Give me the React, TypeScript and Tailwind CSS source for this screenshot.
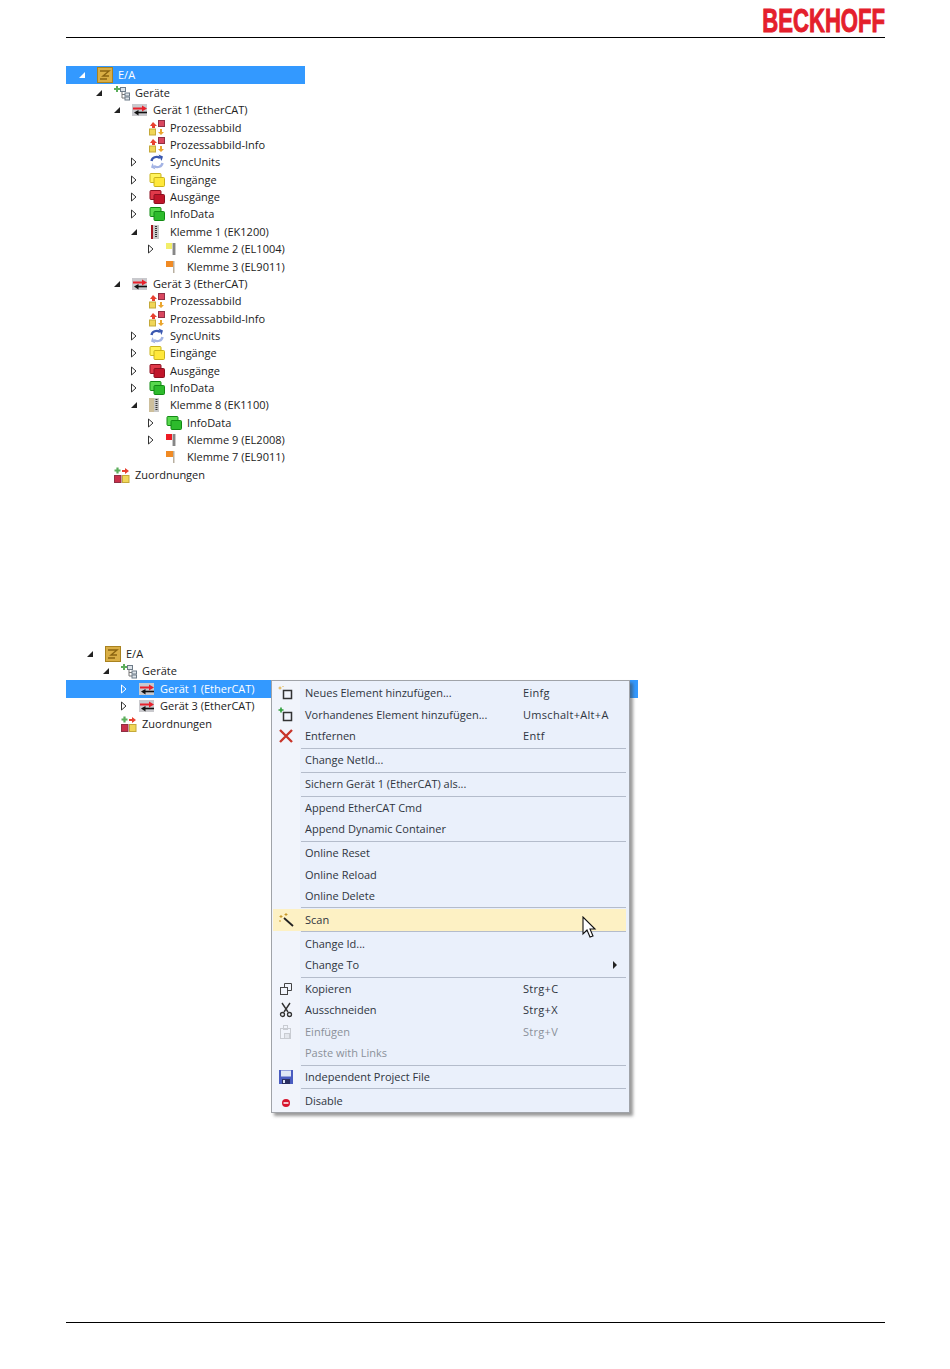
import React from 'react'

type IconName =
  | 'ea' | 'devices' | 'ethercat' | 'image' | 'sync' | 'yellow' | 'red' | 'green'
  | 'coupler' | 'couplerGray' | 'termYellow' | 'termRed' | 'termOrange' | 'mappings'

const Squares = ({ fill, dark, edge }: { fill: string; dark: string; edge: string }) => (
  <svg width="16" height="16" viewBox="0 0 16 16">
    <rect x="1" y="1.500" width="11" height="9" rx="1" fill={fill} stroke={edge} />
    <rect x="5" y="5.500" width="10.500" height="9" rx="1" fill={dark} stroke={edge} />
  </svg>
)

const Terminal = ({ color, dots = true }: { color: string; dots?: boolean }) => (
  <svg width="16" height="16" viewBox="0 0 16 16">
    <rect x="0" y="2" width="7" height="6" fill={color} />
    {dots ? (
      <>
        <rect x="6" y="2" width="4" height="12" fill="#c9c9c9" />
        <path d="M7 3h2M7 5h2M7 7h2M7 9h2M7 11h2M7 13h2" stroke="#444" strokeWidth="1" />
      </>
    ) : (
      <rect x="7" y="2" width="1.500" height="12" fill="#b9b0a0" />
    )}
  </svg>
)

const TreeIcon = ({ name }: { name: IconName }) => {
  switch (name) {
    case 'ea':
      return (
        <svg width="16" height="16" viewBox="0 0 16 16">
          <rect x="0.500" y="0.500" width="15" height="15" fill="#d9ae45" stroke="#a9821f" />
          <path d="M3 4h9L6 9h6M3 12h7" stroke="#8a6410" strokeWidth="1.400" fill="none" />
        </svg>
      )
    case 'devices':
      return (
        <svg width="16" height="16" viewBox="0 0 16 16">
          <path d="M0 4h6M3 1v6" stroke="#5cae5c" strokeWidth="2" />
          <path d="M8 6v7h3M8 9.500h3" stroke="#777" fill="none" />
          <rect x="6.500" y="2.500" width="5" height="4" fill="#dfe5ea" stroke="#6d7b88" />
          <rect x="11" y="8" width="4.500" height="3" fill="#dfe5ea" stroke="#6d7b88" />
          <rect x="11" y="12" width="4.500" height="3" fill="#dfe5ea" stroke="#6d7b88" />
        </svg>
      )
    case 'ethercat':
      return (
        <svg width="16" height="16" viewBox="0 0 16 16">
          <rect x="0" y="2" width="15" height="12" fill="#c9c9cd" />
          <path d="M1 6.500h10" stroke="#e8212b" strokeWidth="2" />
          <path d="M10 3.500 15 6.500l-5 3z" fill="#e8212b" />
          <path d="M15 10.500H5" stroke="#111" strokeWidth="1.600" />
          <path d="M6.500 8 2 10.500 6.500 13.500z" fill="#111" />
        </svg>
      )
    case 'image':
      return (
        <svg width="16" height="16" viewBox="0 0 16 16">
          <path d="M4 2 8 6H6v2H3V6H1z" fill="#e8402f" />
          <rect x="9.500" y="0.500" width="6" height="6" fill="#d9475f" stroke="#8f3045" />
          <rect x="0.500" y="9" width="6" height="6" fill="#f0d658" stroke="#c4a93a" />
          <path d="M11 9h2v3h2l-3 3-3-3h2z" fill="#eaa62f" />
        </svg>
      )
    case 'sync':
      return (
        <svg width="16" height="16" viewBox="0 0 16 16">
          <path d="M2.500 7C3 3.500 7.500 1.500 11 4" stroke="#3b58b0" strokeWidth="2.400" fill="none" />
          <path d="M9.500 0.500 14 2.500l-1.500 4.500z" fill="#3b58b0" />
          <path d="M13.500 9C13 12.500 8.500 14.500 5 12" stroke="#a3b3e4" strokeWidth="2.400" fill="none" />
          <path d="M6.500 15.500 2 13.500 3.500 9z" fill="#a3b3e4" />
        </svg>
      )
    case 'yellow':
      return <Squares fill="#fff35c" dark="#ffe83a" edge="#c9b21c" />
    case 'red':
      return <Squares fill="#e0394a" dark="#c0152a" edge="#8a1020" />
    case 'green':
      return <Squares fill="#58d84e" dark="#2dbb2c" edge="#128a14" />
    case 'coupler':
      return (
        <svg width="16" height="16" viewBox="0 0 16 16">
          <rect x="2" y="1" width="2" height="14" fill="#a31621" />
          <rect x="4" y="1" width="6" height="14" fill="#c9c9c9" />
          <path d="M6 2.500h2M6 4.500h2M6 6.500h2M6 8.500h2M6 10.500h2M6 12.500h2" stroke="#333" />
        </svg>
      )
    case 'couplerGray':
      return (
        <svg width="16" height="16" viewBox="0 0 16 16">
          <rect x="0" y="1" width="5" height="14" fill="#cdbf9c" />
          <rect x="5" y="1" width="5" height="14" fill="#c9c9c9" />
          <path d="M6.500 2.500h2M6.500 4.500h2M6.500 6.500h2M6.500 8.500h2M6.500 10.500h2M6.500 12.500h2" stroke="#333" />
        </svg>
      )
    case 'termYellow':
      return <Terminal color="#f2ee6a" />
    case 'termRed':
      return <Terminal color="#ee1c25" />
    case 'termOrange':
      return <Terminal color="#f08a24" dots={false} />
    case 'mappings':
      return (
        <svg width="16" height="16" viewBox="0 0 16 16">
          <path d="M0.500 3.500h6M3.500 .5v6" stroke="#5cae5c" strokeWidth="2.200" />
          <path d="M8 3h3V1l4 3-4 3V5H8z" fill="#e8402f" />
          <rect x="0.500" y="8.500" width="6.500" height="7" fill="#c9304a" stroke="#8f3045" />
          <rect x="8.500" y="8.500" width="6.500" height="7" fill="#f0d658" stroke="#c4a93a" />
        </svg>
      )
  }
}

const Expander = ({ state, light }: { state?: 'open' | 'closed'; light?: boolean }) => {
  if (state === 'open') {
    return (
      <svg width="10" height="10" viewBox="0 0 10 10">
        <path d="M8 2v6H2z" fill={light ? '#fff' : '#222'} />
      </svg>
    )
  }
  if (state === 'closed') {
    return (
      <svg width="10" height="10" viewBox="0 0 10 10">
        <path d="M2.500 1v8L7 5z" fill="none" stroke={light ? '#fff' : '#333'} />
      </svg>
    )
  }
  return null
}

const indent = ['pl-[11px]', 'pl-[28px]', 'pl-[46px]', 'pl-[63px]', 'pl-[80px]']
const indentLow = ['pl-[19px]', 'pl-[35px]', 'pl-[53px]']

type Node = { level: number; state?: 'open' | 'closed'; icon: IconName; label: string }

const geraet = (n: string, klemmen: Node[]): Node[] => [
  { level: 2, state: 'open', icon: 'ethercat', label: `Gerät ${n} (EtherCAT)` },
  { level: 3, icon: 'image', label: 'Prozessabbild' },
  { level: 3, icon: 'image', label: 'Prozessabbild-Info' },
  { level: 3, state: 'closed', icon: 'sync', label: 'SyncUnits' },
  { level: 3, state: 'closed', icon: 'yellow', label: 'Eingänge' },
  { level: 3, state: 'closed', icon: 'red', label: 'Ausgänge' },
  { level: 3, state: 'closed', icon: 'green', label: 'InfoData' },
  ...klemmen,
]

const topTree: Node[] = [
  { level: 0, state: 'open', icon: 'ea', label: 'E/A' },
  { level: 1, state: 'open', icon: 'devices', label: 'Geräte' },
  ...geraet('1', [
    { level: 3, state: 'open', icon: 'coupler', label: 'Klemme 1 (EK1200)' },
    { level: 4, state: 'closed', icon: 'termYellow', label: 'Klemme 2 (EL1004)' },
    { level: 4, icon: 'termOrange', label: 'Klemme 3 (EL9011)' },
  ]),
  ...geraet('3', [
    { level: 3, state: 'open', icon: 'couplerGray', label: 'Klemme 8 (EK1100)' },
    { level: 4, state: 'closed', icon: 'green', label: 'InfoData' },
    { level: 4, state: 'closed', icon: 'termRed', label: 'Klemme 9 (EL2008)' },
    { level: 4, icon: 'termOrange', label: 'Klemme 7 (EL9011)' },
  ]),
  { level: 1, icon: 'mappings', label: 'Zuordnungen' },
]

const bottomTree: Node[] = [
  { level: 0, state: 'open', icon: 'ea', label: 'E/A' },
  { level: 1, state: 'open', icon: 'devices', label: 'Geräte' },
  { level: 2, state: 'closed', icon: 'ethercat', label: 'Gerät 1 (EtherCAT)' },
  { level: 2, state: 'closed', icon: 'ethercat', label: 'Gerät 3 (EtherCAT)' },
  { level: 1, icon: 'mappings', label: 'Zuordnungen' },
]

const TreeRow = ({ node, padding, selected }: { node: Node; padding: string; selected?: boolean }) => (
  <div className={`flex items-center h-[17.35px] w-full ${padding} ${selected ? 'text-white' : 'text-[#222]'}`}>
    <span className="w-[20px] flex items-center shrink-0">
      <Expander state={node.state} light={selected} />
    </span>
    <span className="w-[16px] h-[16px] shrink-0">
      <TreeIcon name={node.icon} />
    </span>
    <span className="ml-[5px] whitespace-nowrap">{node.label}</span>
  </div>
)

type MenuIconName = 'new' | 'existing' | 'remove' | 'wand' | 'copy' | 'cut' | 'paste' | 'save' | 'disable'

const MenuIcon = ({ name }: { name: MenuIconName }) => {
  switch (name) {
    case 'new':
      return (
        <svg width="16" height="16" viewBox="0 0 16 16">
          <rect x="5.500" y="5.500" width="8" height="8" fill="none" stroke="#333" strokeWidth="1.500" />
          <path d="M2 1.500v3M.5 3h3M5 1v1" stroke="#e0b040" />
        </svg>
      )
    case 'existing':
      return (
        <svg width="16" height="16" viewBox="0 0 16 16">
          <rect x="5.500" y="5.500" width="8" height="8" fill="none" stroke="#333" strokeWidth="1.500" />
          <path d="M3 .5v5M.5 3h5" stroke="#2e9e3a" strokeWidth="1.600" />
        </svg>
      )
    case 'remove':
      return (
        <svg width="16" height="16" viewBox="0 0 16 16">
          <path d="M2 2 14 14M14 2 2 14" stroke="#c8352a" strokeWidth="2.400" />
        </svg>
      )
    case 'wand':
      return (
        <svg width="16" height="16" viewBox="0 0 16 16">
          <path d="M6 6 15 14" stroke="#222" strokeWidth="1.800" />
          <path d="M3 3v3M1.500 4.500h3M8 1v3M6.500 2.500h3M1 9h2" stroke="#c8982a" />
        </svg>
      )
    case 'copy':
      return (
        <svg width="16" height="16" viewBox="0 0 16 16">
          <rect x="2.500" y="6.500" width="7" height="7" fill="none" stroke="#444" />
          <path d="M6.500 6.500V2.500h7v7h-4" fill="none" stroke="#444" />
        </svg>
      )
    case 'cut':
      return (
        <svg width="16" height="16" viewBox="0 0 16 16">
          <path d="M4 1l6 9M12 1 6 10" stroke="#333" strokeWidth="1.400" />
          <circle cx="4.500" cy="12.500" r="2" fill="none" stroke="#333" strokeWidth="1.300" />
          <circle cx="11.500" cy="12.500" r="2" fill="none" stroke="#333" strokeWidth="1.300" />
        </svg>
      )
    case 'paste':
      return (
        <svg width="16" height="16" viewBox="0 0 16 16">
          <rect x="2.500" y="4.500" width="10" height="10" fill="none" stroke="#c9ccd2" />
          <rect x="5.500" y="1.500" width="4" height="4" fill="none" stroke="#c9ccd2" />
          <rect x="6.500" y="9.500" width="5" height="5" fill="#e3e6ec" stroke="#c9ccd2" />
        </svg>
      )
    case 'save':
      return (
        <svg width="16" height="16" viewBox="0 0 16 16">
          <path d="M1 1h14v14H1z" fill="#4a5cc0" />
          <rect x="3" y="1.500" width="10" height="6" fill="#dfe6f5" />
          <rect x="4" y="10" width="8" height="5" fill="#2a2f60" />
          <rect x="5" y="11" width="2" height="3" fill="#dfe6f5" />
        </svg>
      )
    case 'disable':
      return (
        <svg width="16" height="16" viewBox="0 0 16 16">
          <circle cx="8" cy="10" r="4" fill="#d6142c" />
          <path d="M5.500 10h5" stroke="#fff" strokeWidth="1.500" />
        </svg>
      )
  }
}

type MenuEntry =
  | 'sep'
  | { label: string; shortcut?: string; icon?: MenuIconName; disabled?: boolean; active?: boolean; sub?: boolean }

const menu: MenuEntry[] = [
  { label: 'Neues Element hinzufügen...', shortcut: 'Einfg', icon: 'new' },
  { label: 'Vorhandenes Element hinzufügen...', shortcut: 'Umschalt+Alt+A', icon: 'existing' },
  { label: 'Entfernen', shortcut: 'Entf', icon: 'remove' },
  'sep',
  { label: 'Change NetId...' },
  'sep',
  { label: 'Sichern Gerät 1 (EtherCAT) als...' },
  'sep',
  { label: 'Append EtherCAT Cmd' },
  { label: 'Append Dynamic Container' },
  'sep',
  { label: 'Online Reset' },
  { label: 'Online Reload' },
  { label: 'Online Delete' },
  'sep',
  { label: 'Scan', icon: 'wand', active: true },
  'sep',
  { label: 'Change Id...' },
  { label: 'Change To', sub: true },
  'sep',
  { label: 'Kopieren', shortcut: 'Strg+C', icon: 'copy' },
  { label: 'Ausschneiden', shortcut: 'Strg+X', icon: 'cut' },
  { label: 'Einfügen', shortcut: 'Strg+V', icon: 'paste', disabled: true },
  { label: 'Paste with Links', disabled: true },
  'sep',
  { label: 'Independent Project File', icon: 'save' },
  'sep',
  { label: 'Disable', icon: 'disable' },
]

const ContextMenu = () => (
  <div className="absolute left-[205px] top-[34.500px] w-[359px] h-[433px] py-[2px] pl-[1px] pr-[3px] border border-[#a0a3a8] bg-[linear-gradient(to_right,#f1f4fb_28px,#eaf0fb_28px)] shadow-[3px_3px_3px_rgba(70,70,70,0.55)] text-[#2f3540]">
    {menu.map((entry, i) =>
      entry === 'sep' ? (
        <div key={i} className="h-[2.7px] ml-[28px] flex items-center">
          <div className="h-px w-full bg-[#b4bccb]" />
        </div>
      ) : (
        <div
          key={i}
          className={`relative flex items-center h-[21.3px] ${entry.active ? 'bg-[#fdf1c4]' : ''} ${entry.disabled ? 'text-[#8b909a]' : ''}`}
        >
          <span className="w-[32px] pl-[5px] shrink-0 flex items-center">
            {entry.icon && <MenuIcon name={entry.icon} />}
          </span>
          <span className="w-[218px] shrink-0 whitespace-nowrap">{entry.label}</span>
          {entry.shortcut && <span className="whitespace-nowrap tracking-[0.3px]">{entry.shortcut}</span>}
          {entry.sub && (
            <svg className="absolute right-[8px] top-[7px]" width="6" height="8" viewBox="0 0 6 8">
              <path d="M1 0v8l4-4z" fill="#222" />
            </svg>
          )}
        </div>
      ),
    )}
    {/* Mauszeiger */}
    <svg className="absolute left-[310px] top-[235px]" width="16" height="24" viewBox="0 0 16 24">
      <path d="M1 1v17l4-4 3 7 3-1-3-7h5z" fill="#fff" stroke="#111" strokeWidth="1.100" />
    </svg>
  </div>
)

const App = () => (
  <div className="w-[950px] h-[1369px] bg-white text-[11px] leading-[16px] font-['Open_Sans','Noto_Sans',sans-serif] flex flex-col overflow-hidden">
    <header className="ml-[66px] mr-[65px] h-[38px] border-b border-black flex justify-end">
      <span className="h-[37px] w-[122px] flex items-start justify-center">
        <span className="mt-[2px] text-[33px] leading-[38px] font-['Liberation_Sans',sans-serif] font-bold text-[#e4202c] scale-x-[0.67] whitespace-nowrap [-webkit-text-stroke:1px_#e4202c]">
          BECKHOFF
        </span>
      </span>
    </header>

    <div className="mt-[28px] ml-[66px] w-[239px]">
      {topTree.map((node, i) => (
        <div key={i} className={i === 0 ? 'bg-[#3399ff] h-[18.400px] flex items-center' : ''}>
          <TreeRow node={node} padding={indent[node.level]} selected={i === 0} />
        </div>
      ))}
    </div>

    <div className="mt-[162px] ml-[66px] w-[572px] relative">
      {bottomTree.map((node, i) => (
        <div key={i} className={i === 2 ? 'bg-[#3399ff] h-[17.700px] flex items-center' : ''}>
          <TreeRow node={node} padding={indentLow[node.level]} selected={i === 2} />
        </div>
      ))}
      <ContextMenu />
    </div>

    <div className="mt-auto mb-[46px] ml-[66px] mr-[65px] border-b border-black" />
  </div>
)

export default App
